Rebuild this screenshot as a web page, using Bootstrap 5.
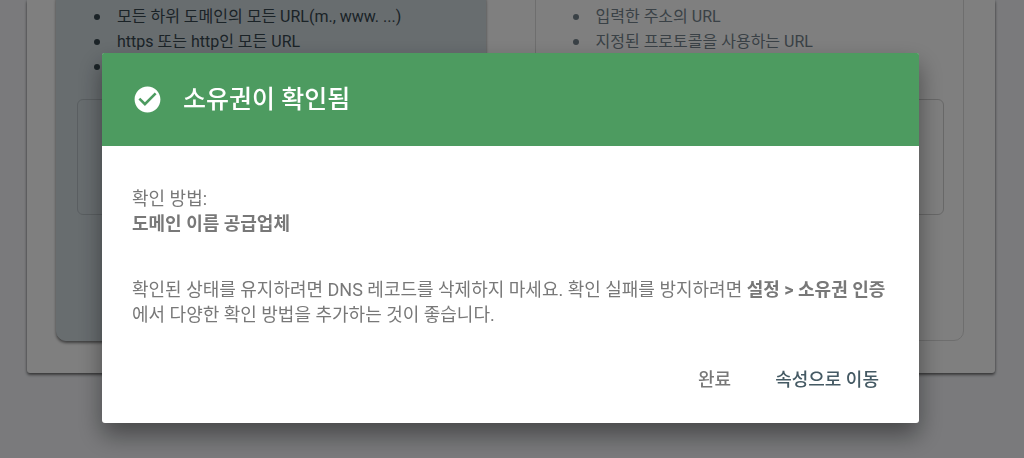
<!DOCTYPE html>
<html lang="ko">
<head>
<meta charset="utf-8">
<meta name="viewport" content="width=device-width, initial-scale=1">
<title>소유권이 확인됨</title>
<link href="https://cdn.jsdelivr.net/npm/bootstrap@5.3.0/dist/css/bootstrap.min.css" rel="stylesheet">
<style>
  body { background: #f4f5f9; font-family: Roboto, "Noto Sans CJK KR", sans-serif; }
  .sheet { display: flow-root; margin: 0 29px 40px 27px; padding: 0 31px 32px 29px; background: #fff; border-radius: 0 0 3px 3px; box-shadow: 0 2px 3px rgba(0,0,0,.5), 0 0 3px rgba(0,0,0,.2); }
  .choices { gap: 49px; margin-top: -10px; }
  .choice { flex: 1 1 0; min-width: 0; padding: 13px 19px 125px 20px; border: 1px solid #dcdcdc; border-radius: 10px; color: #74838c; font-size: 16px; line-height: 25px; }
  .choice-selected { background: #d0dadf; border-color: #d0dadf; color: #37474f; box-shadow: 0 2px 3px rgba(0,0,0,.5); }
  .choice ul { min-height: 95px; margin: 0; padding: 0 0 0 17px; list-style: none; }
  .choice li { display: flex; align-items: center; min-height: 25px; gap: 17px; }
  .choice li::before { content: ""; width: 6px; height: 6px; border-radius: 50%; background: currentColor; }
  .address { display: block; width: 100%; height: 116px; border: 1px solid #d0d0d0; border-radius: 6px; background: transparent; }
  .choice-selected .address { border-color: #b4bdc2; }
  .modal-dialog { max-width: none; margin: 53px 105px 24px 102px; }
  .modal-content { border: 0; border-radius: 3px; color: #787878; box-shadow: 0 12px 24px rgba(0,0,0,.42); }
  .modal-header { min-height: 93px; padding: 0 30px; gap: 20px; border: 0; border-radius: 2px 2px 0 0; background: #4d9b60; color: #fff; }
  .modal-title { font-size: 25px; line-height: 36px; font-weight: 500; }
  .modal-body { padding: 40px 30px 34px; font-size: 18px; line-height: 25px; }
  .modal-body p { margin: 0 0 41px; }
  .modal-body p:last-child { margin: 0; }
  .modal-footer { padding: 0 24px 24px; gap: 12px; border: 0; }
  .modal-footer .btn { margin: 0; padding: 6px 16px; border: 0; font-size: 18px; line-height: 26px; font-weight: 500; color: #787878; }
  .modal-footer .btn-go { color: #455a64; }
  .backdrop-tint { background: rgba(0,0,0,.5); }
</style>
</head>
<body>
<main class="sheet">
  <div class="choices d-flex">
    <section class="choice choice-selected">
      <ul>
        <li>모든 하위 도메인의 모든 URL(m., www. ...)</li>
        <li>https 또는 http인 모든 URL</li>
        <li></li>
      </ul>
      <input class="address" type="text" aria-label="도메인">
    </section>
    <section class="choice">
      <ul>
        <li>입력한 주소의 URL</li>
        <li>지정된 프로토콜을 사용하는 URL</li>
      </ul>
      <input class="address" type="text" aria-label="URL">
    </section>
  </div>
</main>

<div class="modal show d-block backdrop-tint" role="dialog" aria-modal="true" aria-labelledby="dialogTitle">
  <div class="modal-dialog">
    <div class="modal-content">
      <div class="modal-header justify-content-start">
        <svg width="31" height="31" viewBox="0 0 24 24" fill="currentColor" aria-hidden="true"><path d="M12 2C6.48 2 2 6.48 2 12s4.480 10 10 10 10-4.480 10-10S17.520 2 12 2zm-2 15l-5-5 1.410-1.410L10 14.170l7.590-7.590L19 8l-9 9z"/></svg>
        <h1 class="modal-title" id="dialogTitle">소유권이 확인됨</h1>
      </div>
      <div class="modal-body">
        <p>확인 방법:<br><strong>도메인 이름 공급업체</strong></p>
        <p>확인된 상태를 유지하려면 DNS 레코드를 삭제하지 마세요. 확인 실패를 방지하려면 <strong>설정 &gt; 소유권 인증</strong>에서 다양한 확인 방법을 추가하는 것이 좋습니다.</p>
      </div>
      <div class="modal-footer">
        <button type="button" class="btn">완료</button>
        <button type="button" class="btn btn-go">속성으로 이동</button>
      </div>
    </div>
  </div>
</div>
<script src="https://cdn.jsdelivr.net/npm/bootstrap@5.3.0/dist/js/bootstrap.bundle.min.js"></script>
</body>
</html>
